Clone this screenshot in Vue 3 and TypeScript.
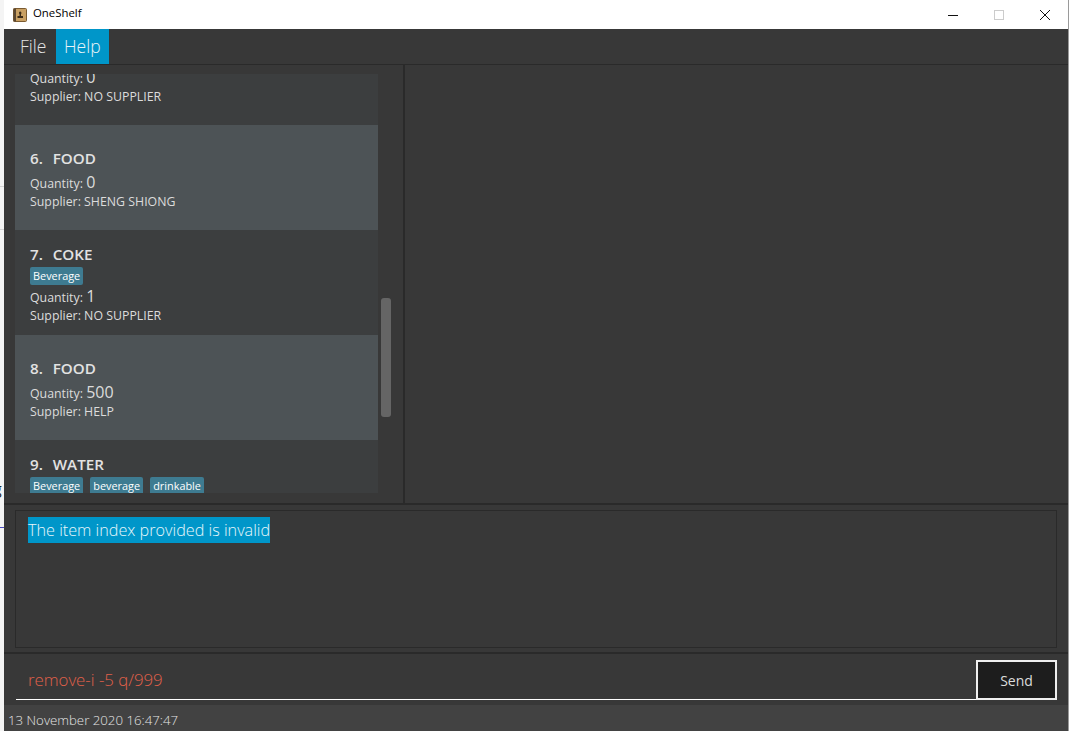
<script setup lang="ts">
interface Item { idx: number; name: string; tags: string[]; qty: number; supplier: string }
const items: Item[] = [
  { idx: 5, name: 'RICE', tags: [], qty: 0, supplier: 'NO SUPPLIER' },
  { idx: 6, name: 'FOOD', tags: [], qty: 0, supplier: 'SHENG SHIONG' },
  { idx: 7, name: 'COKE', tags: ['Beverage'], qty: 1, supplier: 'NO SUPPLIER' },
  { idx: 8, name: 'FOOD', tags: [], qty: 500, supplier: 'HELP' },
  { idx: 9, name: 'WATER', tags: ['Beverage', 'beverage', 'drinkable'], qty: 10, supplier: 'NO SUPPLIER' },
]
</script>

<template>
  <div class="desk">
    <div class="edge">
      <span class="edge-line a"></span>
      <span class="edge-line b"></span>
      <span class="edge-g">g</span>
      <span class="edge-blue"></span>
    </div>
    <div class="window">
      <header class="titlebar">
        <svg class="appicon" width="14" height="14" viewBox="0 0 14 14">
          <rect x="0.5" y="0.5" width="13" height="13" rx="1" fill="#c9a063" stroke="#7a5a30" />
          <rect x="0.5" y="0.5" width="2.5" height="13" fill="#5a4630" />
          <path d="M7 3.5a1.5 1.5 0 0 1 1 2.6V8h2v2H4.500V8h2V6.100A1.500 1.500 0 0 1 7 3.500z" fill="#3d2c18" />
        </svg>
        <span class="apptitle">OneShelf</span>
        <div class="controls">
          <span class="ctl"><svg width="12" height="12" viewBox="0 0 12 12"><path d="M1 6.500h10" stroke="#111" stroke-width="1" /></svg></span>
          <span class="ctl"><svg width="12" height="12" viewBox="0 0 12 12"><rect x="1.500" y="1.500" width="9" height="9" fill="none" stroke="#ccc" /></svg></span>
          <span class="ctl"><svg width="12" height="12" viewBox="0 0 12 12"><path d="M1 1l10 10M11 1L1 11" stroke="#111" stroke-width="1" /></svg></span>
        </div>
      </header>

      <nav class="menubar">
        <span class="menu">File</span>
        <span class="menu active">Help</span>
      </nav>

      <main class="panes">
        <section class="left">
          <div class="list">
            <div class="list-inner">
              <article v-for="it in items" :key="it.idx" class="row" :class="{ alt: it.idx % 2 === 0 }">
                <div class="name" :class="{ tagged: it.tags.length }">{{ it.idx }}.&nbsp; {{ it.name }}</div>
                <div v-if="it.tags.length" class="tags">
                  <span v-for="t in it.tags" :key="t" class="tag">{{ t }}</span>
                </div>
                <div class="line qty">Quantity: <span class="num">{{ it.qty }}</span></div>
                <div class="line">Supplier: {{ it.supplier }}</div>
              </article>
            </div>
          </div>
          <div class="scroll"><div class="thumb"></div></div>
        </section>
        <section class="right"></section>
      </main>

      <section class="result">
        <div class="result-box">
          <span class="selected">The item index provided is invalid</span>
        </div>
      </section>

      <section class="command">
        <div class="input">remove-i -5 q/999</div>
        <button class="send">Send</button>
      </section>

      <footer class="status">13 November 2020 16:47:47</footer>
    </div>
  </div>
</template>

<style>
html, body { margin: 0; background: #fff; }
</style>

<style scoped>
.desk {
  width: 1069px;
  height: 731px;
  display: flex;
  overflow: hidden;
  background: #f0f0f0;
  font-family: "Open Sans", "Noto Sans", sans-serif;
}
.edge { width: 4px; flex: none; position: relative; background: #f4f4f4; overflow: hidden; }
.edge-line { position: absolute; left: 0; width: 4px; height: 1px; background: #d4d4d4; }
.edge-line.a { top: 186px; }
.edge-line.b { top: 229px; }
.edge-g { position: absolute; left: -6px; top: 482px; font-size: 14px; line-height: 14px; color: #222; }
.edge-blue { position: absolute; left: 0; top: 527px; width: 4px; height: 1px; background: #4a4ac0; }
.window { flex: 1; min-width: 0; display: flex; flex-direction: column; background: #383838; border-right: 1px solid #9a9a9a; }
.titlebar { height: 29px; flex: none; background: #fff; display: flex; align-items: center; padding-left: 9px; }
.appicon { flex: none; }
.apptitle { margin-left: 6px; font-size: 11.400px; color: #000; position: relative; top: -2px; }
.controls { margin-left: auto; display: flex; }
.ctl { width: 46px; height: 29px; display: flex; align-items: center; justify-content: center; }
.menubar { height: 36px; flex: none; display: flex; box-sizing: border-box; padding-left: 11px; background: #383838; border-bottom: 1px solid #2a2a2a; }
.menu { width: 41px; height: 35px; box-sizing: border-box; padding: 0 0 2px 5px; display: flex; align-items: center; font-size: 17.500px; font-weight: 300; color: #e4e4e4; }
.menu.active { width: 53px; padding-left: 8px; background: #0096c9; color: #e8f4f8; }
.panes { height: 440px; flex: none; display: flex; box-sizing: border-box; border-bottom: 2px solid #2a2a2a; }
.left { width: 401px; flex: none; display: flex; box-sizing: border-box; padding: 9px 0 10px 11px; border-right: 2px solid #2a2a2a; }
.list { width: 363px; flex: none; overflow: hidden; }
.list-inner { margin-top: -54px; }
.row { height: 105px; box-sizing: border-box; padding: 4px 0 0 15px; display: flex; flex-direction: column; justify-content: center; background: #3c3e3f; color: #dcdcdc; }
.row.alt { background: #4d5356; }
.name { font-size: 15.200px; font-weight: 600; word-spacing: 1px; line-height: 20px; margin-bottom: 3px; color: #e2e2e2; }
.name.tagged { margin-bottom: 0; }
.tags { display: flex; gap: 7px; margin: 3px 0 0; }
.tag { height: 18px; line-height: 18px; padding: 0 3px; border-radius: 2px; background: #3e7b91; color: #fff; font-size: 10.900px; }
.line { font-size: 12.350px; line-height: 18px; color: #dcdcdc; }
.qty { margin-top: 2px; }
.num { font-size: 16px; }
.scroll { flex: 1; position: relative; }
.thumb { position: absolute; left: 3px; top: 224px; width: 10px; height: 119px; border-radius: 3px; background: #656565; }
.right { flex: 1; }
.result { height: 149px; flex: none; box-sizing: border-box; padding: 5px 11px 4px; border-bottom: 2px solid #2a2a2a; }
.result-box { height: 138px; box-sizing: border-box; border: 1px solid #2a2a2a; background: #383838; padding: 6px 12px; }
.selected { display: inline-block; height: 26px; line-height: 27px; background: #0096c9; color: #e8f6fb; font-size: 16.200px; font-weight: 300; }
.command { height: 51px; flex: none; display: flex; box-sizing: border-box; padding: 6px 11px 5px 12px; }
.input { flex: 1; box-sizing: border-box; border-bottom: 1px solid #fff; padding: 9px 0 0 12px; font-size: 16.800px; font-weight: 300; line-height: 22px; color: #e0604a; }
.send { width: 81px; height: 40px; box-sizing: border-box; border: 2px solid #efefef; background: #1d1d1d; color: #dcdcdc; font: 14px "Open Sans", "Noto Sans", sans-serif; padding: 0; }
.status { flex: 1; background: #424242; color: #e4e4e4; font-size: 13.250px; font-weight: 300; line-height: 30px; padding-left: 4px; }
</style>
